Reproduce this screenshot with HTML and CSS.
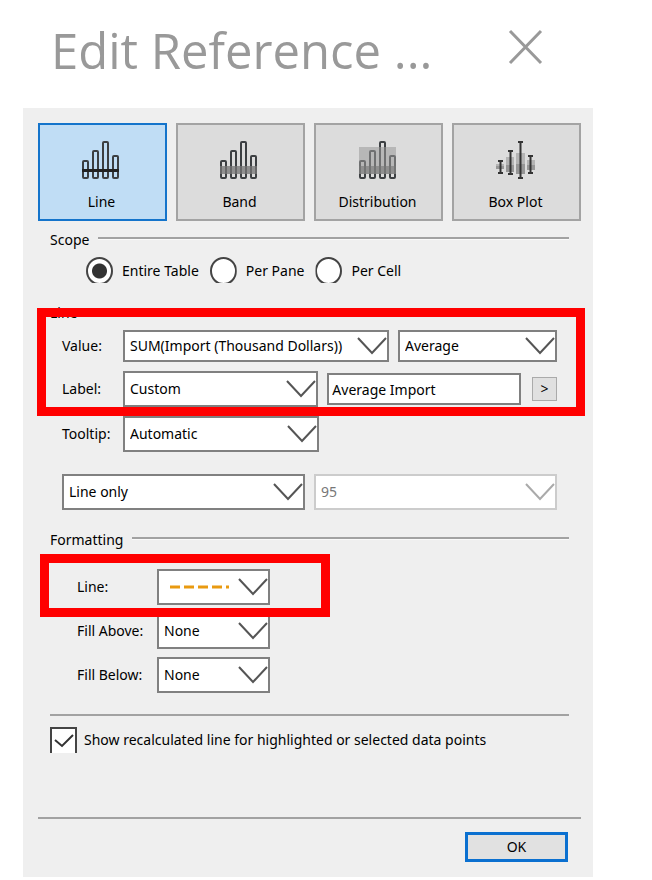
FILE: index.html
```html
<!DOCTYPE html>
<html lang="en">
<head>
<meta charset="utf-8">
<meta name="viewport" content="width=device-width, initial-scale=1">
<title>Edit Reference Line</title>
<link rel="stylesheet" href="styles.css">
</head>
<body>
<header class="titlebar">
  <h1 class="title">Edit Reference ...</h1>
  <button class="close" type="button" aria-label="Close">
    <svg width="36" height="36" viewBox="0 0 36 36"><path d="M2 2 33 34M33 2 2 34"/></svg>
  </button>
</header>

<form class="dialog">
  <div class="tabs">
    <button class="tab tab-active" type="button">
      <svg class="icon" width="40" height="40" viewBox="0 0 40 40">
        <g class="bar"><rect x="1" y="20" width="5" height="17" rx="1"/><rect x="11" y="10" width="5" height="27" rx="1"/><rect x="21" y="1" width="5" height="36" rx="1"/><rect x="31" y="15" width="5" height="22" rx="1"/></g>
        <rect class="ink" x="0" y="28" width="37" height="3"/>
      </svg>
      Line
    </button>
    <button class="tab" type="button">
      <svg class="icon" width="40" height="40" viewBox="0 0 40 40">
        <g class="bar"><rect x="1" y="20" width="5" height="17" rx="1"/><rect x="11" y="10" width="5" height="27" rx="1"/><rect x="21" y="1" width="5" height="36" rx="1"/><rect x="31" y="15" width="5" height="22" rx="1"/></g>
        <rect class="band" x="0" y="25" width="37" height="8"/>
      </svg>
      Band
    </button>
    <button class="tab" type="button">
      <svg class="icon" width="40" height="40" viewBox="0 0 40 40">
        <g class="bar"><rect x="2" y="20" width="5" height="17" rx="1"/><rect x="12" y="10" width="5" height="27" rx="1"/><rect x="22" y="1" width="5" height="36" rx="1"/><rect x="32" y="15" width="5" height="22" rx="1"/></g>
        <rect class="range" x="1" y="6" width="37" height="27"/>
        <rect class="range-core" x="1" y="25" width="37" height="8"/>
      </svg>
      Distribution
    </button>
    <button class="tab" type="button">
      <svg class="icon" width="40" height="40" viewBox="0 0 40 40">
        <g class="box"><rect x="0" y="23" width="8" height="5"/><rect x="10" y="16" width="8" height="15"/><rect x="20" y="12" width="9" height="21"/><rect x="31" y="19" width="8" height="10"/></g>
        <g class="box-core"><rect x="0" y="25" width="8" height="3"/><rect x="10" y="24" width="8" height="7"/><rect x="20" y="23" width="9" height="10"/><rect x="31" y="24" width="8" height="5"/></g>
        <path class="whisker" d="M2 20H7M4.500 20V32M2 32H7M12 10H17M14.500 10V33M12 33H17M22 1H27M24.500 1V37M22 37H27M32 15H37M34.500 15V32M32 32H37"/>
      </svg>
      Box Plot
    </button>
  </div>

  <div class="content">
    <section class="section" role="radiogroup" aria-labelledby="scope">
      <h2 class="legend" id="scope">Scope</h2>
      <div class="radios">
        <label class="choice"><input class="radio" type="radio" name="scope" checked>Entire Table</label>
        <label class="choice"><input class="radio" type="radio" name="scope">Per Pane</label>
        <label class="choice"><input class="radio" type="radio" name="scope">Per Cell</label>
      </div>
    </section>

    <section class="section fields-section">
      <h2 class="legend">Line</h2>
      <div class="fields">
        <div class="group mark-wide">
          <div class="row">
            <label class="name" for="value">Value:</label>
            <span class="select select-low grow-value">
              <select id="value"><option>SUM(Import (Thousand Dollars))</option></select>
              <svg class="chevron" width="30" height="18" viewBox="0 0 30 18"><path d="M1 1 15 16 29 1"/></svg>
            </span>
            <span class="select select-low grow-kind">
              <select aria-label="Aggregation"><option>Average</option></select>
              <svg class="chevron" width="30" height="18" viewBox="0 0 30 18"><path d="M1 1 15 16 29 1"/></svg>
            </span>
          </div>
          <div class="row">
            <label class="name" for="label">Label:</label>
            <span class="select grow-label">
              <select id="label"><option>Custom</option></select>
              <svg class="chevron" width="30" height="18" viewBox="0 0 30 18"><path d="M1 1 15 16 29 1"/></svg>
            </span>
            <input class="text" type="text" value="Average Import" aria-label="Custom label">
            <button class="insert" type="button" aria-label="Insert field">&gt;</button>
          </div>
        </div>
        <div class="row">
          <label class="name" for="tooltip">Tooltip:</label>
          <span class="select grow-tooltip">
            <select id="tooltip"><option>Automatic</option></select>
            <svg class="chevron" width="30" height="18" viewBox="0 0 30 18"><path d="M1 1 15 16 29 1"/></svg>
          </span>
          <span class="spacer"></span>
        </div>
        <div class="row interval">
          <span class="select grow-even">
            <select aria-label="Confidence interval"><option>Line only</option></select>
            <svg class="chevron" width="30" height="18" viewBox="0 0 30 18"><path d="M1 1 15 16 29 1"/></svg>
          </span>
          <span class="select select-off grow-even">
            <select aria-label="Confidence level" disabled><option>95</option></select>
            <svg class="chevron" width="30" height="18" viewBox="0 0 30 18"><path d="M1 1 15 16 29 1"/></svg>
          </span>
        </div>
      </div>
    </section>

    <section class="section">
      <h2 class="legend">Formatting</h2>
      <div class="formats">
        <div class="row mark-narrow">
          <label class="name" for="stroke">Line:</label>
          <span class="select select-small">
            <select id="stroke"><option label=" "></option></select>
            <svg class="dashes" width="60" height="4" viewBox="0 0 60 4"><path d="M0 2H59"/></svg>
            <svg class="chevron" width="30" height="18" viewBox="0 0 30 18"><path d="M1 1 15 16 29 1"/></svg>
          </span>
        </div>
        <div class="row">
          <label class="name" for="above">Fill Above:</label>
          <span class="select select-small">
            <select id="above"><option>None</option></select>
            <svg class="chevron" width="30" height="18" viewBox="0 0 30 18"><path d="M1 1 15 16 29 1"/></svg>
          </span>
        </div>
        <div class="row">
          <label class="name" for="below">Fill Below:</label>
          <span class="select select-small">
            <select id="below"><option>None</option></select>
            <svg class="chevron" width="30" height="18" viewBox="0 0 30 18"><path d="M1 1 15 16 29 1"/></svg>
          </span>
        </div>
      </div>
    </section>

    <div class="recalc">
      <label class="check">
        <span class="tick">
          <input type="checkbox" checked>
          <svg width="20" height="14" viewBox="0 0 20 14"><path d="M1 6 8 12 19 1"/></svg>
        </span>
        Show recalculated line for highlighted or selected data points
      </label>
    </div>
  </div>

  <footer class="footer">
    <button class="ok" type="button">OK</button>
  </footer>
</form>
</body>
</html>
```
FILE: styles.css
```css
* {
  box-sizing: border-box;
}

body {
  margin: 0;
  padding: 0 59px 3px 23px;
  background: #fff;
  color: #000;
  font: 14px/20px "Noto Sans", "Open Sans", sans-serif;
}

button,
select,
input {
  margin: 0;
  font: inherit;
  color: inherit;
}

.titlebar {
  display: flex;
  justify-content: space-between;
  align-items: flex-start;
  height: 108px;
  padding: 16px 49px 0 28px;
}

.title {
  margin: 0;
  color: #999;
  font: 400 49px/68px "Open Sans", "Noto Sans", sans-serif;
  white-space: nowrap;
}

.close {
  display: flex;
  margin-top: 13px;
  padding: 0;
  border: 0;
  background: none;
}

.close path {
  fill: none;
  stroke: #999;
  stroke-width: 3;
}

.dialog {
  padding: 15px 12px 15px 15px;
  background: #efefef;
}

.tabs {
  display: grid;
  grid-template-columns: repeat(4, 1fr);
  gap: 9px;
}

.tab {
  display: flex;
  flex-direction: column;
  align-items: center;
  gap: 11px;
  height: 98px;
  padding: 16px 2px 0 0;
  border: 2px solid #a3a3a3;
  background: #dcdcdc;
}

.tab-active {
  border-color: #1474cb;
  background: #c0ddf5;
}

.bar {
  fill: none;
  stroke: #3c3f42;
  stroke-width: 2;
}

.ink {
  fill: #222;
}

.band {
  fill: #777;
  fill-opacity: 0.75;
}

.range {
  fill: #999;
  fill-opacity: 0.55;
}

.range-core {
  fill: #777;
  fill-opacity: 0.6;
}

.box {
  fill: #b4b4b4;
}

.box-core {
  fill: #969696;
}

.whisker {
  fill: none;
  stroke: #333;
  stroke-width: 2;
}

.content {
  padding: 9px 12px 0;
}

.legend {
  display: flex;
  align-items: center;
  gap: 9px;
  margin: 0;
  font: inherit;
}

.legend::after {
  content: "";
  flex: 1;
  height: 2px;
  margin-bottom: 4px;
  background: #a2a2a2;
  box-shadow: 0 1px #fafafa;
}

.radios {
  display: flex;
  gap: 11px;
  padding: 7px 0 0 36px;
}

.choice {
  display: flex;
  align-items: center;
  gap: 9px;
  height: 28px;
}

.radio {
  appearance: none;
  width: 27px;
  height: 28px;
  border: 2px solid #444;
  border-radius: 50%;
  background: #fff;
  clip-path: inset(0 0 2px);
}

.radio:checked {
  background: radial-gradient(circle, #333 7px, #fff 8px);
}

.fields-section {
  padding-top: 18px;
}

.fields {
  display: flex;
  flex-direction: column;
  gap: 9px;
  padding: 7px 12px 20px;
}

.group {
  display: flex;
  flex-direction: column;
  gap: 9px;
  position: relative;
}

.row {
  display: flex;
  align-items: center;
  gap: 9px;
}

.name {
  flex: none;
  width: 52px;
  white-space: nowrap;
}

.select {
  display: grid;
  align-items: center;
  min-width: 0;
  height: 36px;
  border: 2px solid #808080;
  background: #fff;
}

.select > * {
  grid-area: 1 / 1;
}

.select select {
  appearance: none;
  width: 100%;
  height: 100%;
  min-width: 0;
  padding: 0 5px;
  border: 0;
  background: none;
}

.select-low {
  height: 32px;
}

.select-off {
  border-color: #ccc;
  color: #777;
}

.select-off select {
  opacity: 1;
}

.chevron {
  justify-self: end;
  pointer-events: none;
}

.chevron path {
  fill: none;
  stroke: #555;
  stroke-width: 2;
}

.select-off .chevron path {
  stroke: #aaa;
}

.grow-value {
  flex: 267 1 0;
}

.grow-kind {
  flex: 158 1 0;
}

.grow-label {
  flex: 198 1 0;
}

.grow-tooltip {
  flex: 192 1 0;
}

.grow-even {
  flex: 1 1 0;
}

.text {
  flex: 190 1 0;
  min-width: 0;
  height: 32px;
  padding: 0 3px;
  border: 2px solid #808080;
  border-radius: 0;
  background: #fff;
}

.insert {
  flex: none;
  width: 25px;
  height: 24px;
  margin-left: 2px;
  padding: 0;
  border: 1px solid #aaa;
  background: #e0e0e0;
  line-height: 20px;
}

.spacer {
  flex: 229 1 0;
}

.interval {
  padding-top: 13px;
}

/* Red frames that call out the edited settings. */
.mark-wide::after,
.mark-narrow::after {
  content: "";
  position: absolute;
  border: 9px solid #f00;
  pointer-events: none;
}

.mark-wide::after {
  inset: -22px -28px -9px -25px;
}

.mark-narrow {
  position: relative;
}

.mark-narrow::after {
  inset: -15px -60px -12px -37px;
}

.formats {
  display: flex;
  flex-direction: column;
  align-items: flex-start;
  gap: 8px;
  padding: 19px 27px 21px;
}

.formats .name {
  width: 71px;
}

.select-small {
  width: 113px;
}

.dashes {
  margin-left: 11px;
  pointer-events: none;
}

.dashes path {
  stroke: #e99a10;
  stroke-width: 3;
  stroke-dasharray: 10 4;
}

.recalc {
  padding-top: 11px;
  border-top: 2px solid #a2a2a2;
}

.check {
  display: flex;
  align-items: center;
  gap: 7px;
}

.tick {
  display: grid;
  place-items: center;
  width: 27px;
  height: 26px;
  border: 2px solid #444;
  border-bottom: 0;
  background: #fff;
}

.tick > * {
  grid-area: 1 / 1;
}

.tick input {
  appearance: none;
  width: 100%;
  height: 100%;
}

.tick svg {
  visibility: hidden;
  pointer-events: none;
}

.tick input:checked + svg {
  visibility: visible;
}

.tick path {
  fill: none;
  stroke: #333;
  stroke-width: 2;
}

.footer {
  display: flex;
  justify-content: flex-end;
  margin-top: 64px;
  padding: 13px 13px 0 0;
  border-top: 2px solid #a2a2a2;
}

.ok {
  width: 103px;
  height: 30px;
  padding: 0;
  border: 3px solid #0b70d0;
  background: #e1e1e1;
}
```
